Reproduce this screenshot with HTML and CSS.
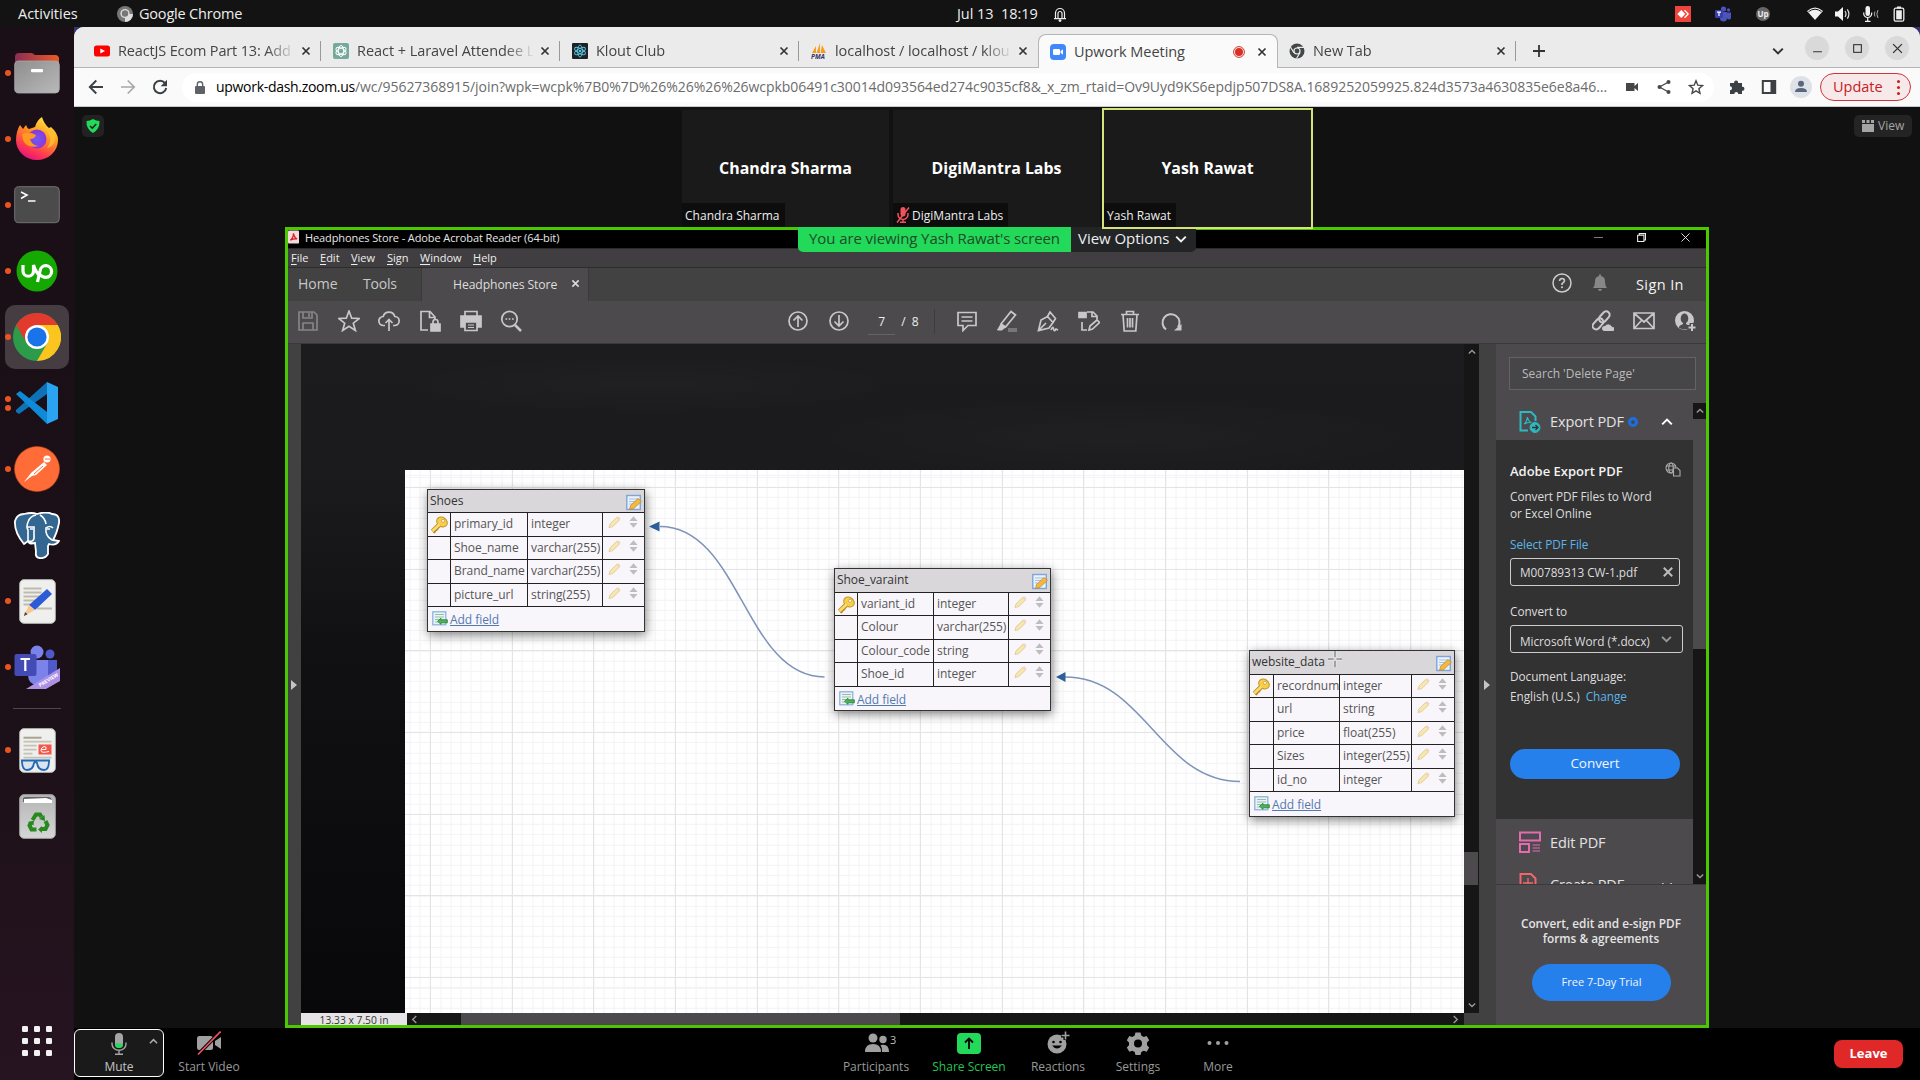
FILE: index.html
```html
<!DOCTYPE html>
<html lang="en">
<head>
<meta charset="utf-8">
<title>Upwork Meeting</title>
<link rel="stylesheet" href="styles.css">
</head>
<body>
<svg class="defs" aria-hidden="true">
  <defs>
    <linearGradient id="gFolder" x1="0" x2="1"><stop offset="0" stop-color="#8a2d55"/><stop offset="1" stop-color="#ee5a24"/></linearGradient>
    <linearGradient id="gGrey" x1="0" y1="0" x2="1" y2="1"><stop offset="0" stop-color="#8e8e8e"/><stop offset="1" stop-color="#b9b9b9"/></linearGradient>
    <linearGradient id="gFox" x1="0.8" y1="0" x2="0.3" y2="1"><stop offset="0" stop-color="#fff44f"/><stop offset=".4" stop-color="#ff9a1f"/><stop offset=".75" stop-color="#ff3d4f"/><stop offset="1" stop-color="#e5107f"/></linearGradient>
    <radialGradient id="gGlobe"><stop offset="0" stop-color="#6a5cf5"/><stop offset="1" stop-color="#8f35d8"/></radialGradient>
    <linearGradient id="gBin" x1="0" y1="0" x2="0" y2="1"><stop offset="0" stop-color="#b5b5b5"/><stop offset="1" stop-color="#d6d6d6"/></linearGradient>
  </defs>
  <symbol id="x" viewBox="0 0 10 10"><path d="M1.5 1.5l7 7M8.5 1.5l-7 7" stroke="currentColor" stroke-width="1.7" fill="none"/></symbol>
  <symbol id="down" viewBox="0 0 10 10"><path d="M1 3l4 4 4-4" stroke="currentColor" stroke-width="1.7" fill="none"/></symbol>
  <symbol id="up" viewBox="0 0 10 10"><path d="M1 7l4-4 4 4" stroke="currentColor" stroke-width="1.7" fill="none"/></symbol>
  <symbol id="key" viewBox="0 0 18 18"><path d="M2.500 15.500L9 9" stroke="#b98a1c" stroke-width="4.600"/><path d="M4 17l1.500-2.500L8 13" stroke="#b98a1c" stroke-width="2" fill="none"/><ellipse cx="12" cy="6" rx="5.600" ry="4.600" transform="rotate(35 12 6)" fill="#f7ce4a" stroke="#c3952a"/><path d="M2.500 15L9.500 8.500" stroke="#f9dc6b" stroke-width="2.800"/><circle cx="13" cy="4.800" r="1.500" fill="#fff" stroke="#b98a1c" stroke-width=".6"/></symbol>
  <symbol id="pen" viewBox="0 0 14 14"><path d="M1 13l1.200-4L9.500 2l3 2.800L5 12z" fill="#f7e6ae" stroke="#d9c591" stroke-width=".8"/><path d="M9.500 2l1.500-1.200 2.500 2.400-1 1.600z" fill="#eed2c0"/></symbol>
  <symbol id="sort" viewBox="0 0 10 14"><path d="M5 .5L9.500 6h-9zM5 13.500L.5 8h9z" fill="#bdbcbf"/></symbol>
  <symbol id="note" viewBox="0 0 16 17"><rect x=".8" y="1.500" width="13.500" height="14" fill="#eaf2fc" stroke="#7ea5d8" stroke-width="1.400"/><path d="M3 5h9M3 7.500h9M3 10h5" stroke="#a5c0e3"/><path d="M3.500 15.500l1-4 7.500-7 3.500 2.800-7.500 7z" fill="#f2b93c" stroke="#b98430" stroke-width=".7"/></symbol>
  <symbol id="add" viewBox="0 0 16 15"><rect x=".8" y=".8" width="13" height="13" fill="#e8f2fb" stroke="#86aedb" stroke-width="1.200"/><path d="M3 3.500h9M3 6h9M3 8.500h4M3 11h3" stroke="#9bbf9d"/><path d="M5.500 10.300L9 7.300v1.500h6.300v3H9v1.500z" fill="#4fb35b" stroke="#1d7c2c" stroke-width=".8"/></symbol>
</svg>

<header class="topbar">
  <span class="tb-act">Activities</span>
  <svg class="i16" viewBox="0 0 16 16"><circle cx="8" cy="8" r="8" fill="#777"/><path d="M8 8L16 8A8 8 0 0 1 8 16z" fill="#ddd"/><circle cx="8" cy="7.500" r="4.600" fill="#ddd"/><circle cx="8" cy="7.500" r="3.200" fill="#777"/></svg>
  <span class="tb-app">Google Chrome</span>
  <span class="tb-date">Jul 13&nbsp; 18:19</span>
  <svg class="tb-bell" viewBox="0 0 14 16"><path d="M2.500 12V7a4.500 4.500 0 0 1 9 0v5M1 12.600h12M5 12V7.500a2 2 0 0 1 4 0V12" fill="none" stroke="#eee" stroke-width="1.200"/><circle cx="7" cy="14.600" r="1.400" fill="#eee"/></svg>
  <svg class="tr tr1" viewBox="0 0 16 16"><rect width="16" height="16" fill="#ef443b"/><path d="M6.300 4l4 4-4 4-4-4z" fill="#fff"/><path d="M9.500 4.300L13.200 8l-3.700 3.700" fill="none" stroke="#fff" stroke-width="1.300"/></svg>
  <svg class="tr tr2" viewBox="0 0 16 16"><circle cx="8.500" cy="3" r="2.600" fill="#4b53bc"/><circle cx="13.500" cy="4" r="1.700" fill="#4b53bc"/><path d="M5 6h7v6a3.500 3.500 0 0 1-7 0zM12 6.500h4V11a2 2 0 0 1-4 1z" fill="#4b53bc"/><rect y="4" width="8" height="8" rx="1" fill="#3940ab"/><path d="M2 6.200h4M4 6.200V10" stroke="#fff" stroke-width="1.200"/></svg>
  <span class="tr-up">Up</span>
  <svg class="tr tr3" viewBox="0 0 16 14"><path d="M0 4Q8-3 16 4L8 13z" fill="#f2f2f2"/><path d="M1.500 4.700q6.500-5 13 0" fill="none" stroke="#131313"/></svg>
  <svg class="tr tr4" viewBox="0 0 16 14"><path d="M0 4.500h3L8 0v14L3 9.500H0z" fill="#f2f2f2"/><path d="M10 4q2 3 0 6M12.300 2.300q3.200 4.700 0 9.400" stroke="#ddd" stroke-width="1.200" fill="none"/></svg>
  <svg class="tr tr5" viewBox="0 0 16 16"><rect x="2.500" width="4.500" height="10" rx="2.200" fill="#f2f2f2"/><path d="M.7 6.500v1a4 4 0 0 0 8 0v-1M4.700 11.500V15M2 15.300h5.500" stroke="#f2f2f2" stroke-width="1.200" fill="none"/><path d="M12 5.500q-1.500 2.500 0 5M15 4q-2.300 4 0 8" stroke="#aaa" fill="none"/></svg>
  <svg class="tr tr6" viewBox="0 0 12 16"><path d="M4 .5h4v2H4z" fill="#eee"/><rect x="1.200" y="2.200" width="9.600" height="13" rx="1.500" fill="none" stroke="#eee" stroke-width="1.300"/><rect x="3.200" y="4.300" width="5.600" height="9" fill="#eee"/></svg>
</header>

<div class="desktop">
<nav class="dock">
  <div class="app dot"><svg class="files" width="46" height="44" viewBox="0 0 46 44"><path d="M1 6a4 4 0 0 1 4-4h13l3 2h20a4 4 0 0 1 4 4v20H1z" fill="url(#gFolder)"/><rect x=".7" y="10" width="44.600" height="32" rx="4" fill="url(#gGrey)" stroke="#aaa" stroke-width=".8"/><rect x="17" y="18" width="12" height="3.200" rx="1" fill="#fff"/></svg></div>
  <div class="app dot"><svg width="46" height="46" viewBox="0 0 46 46"><path d="M3 16q1-4 3-7l3 4 3-4q1 3 3 4l6-2q2-7 7-10 2 7 7 11l2-1q7 6 7 13a21 20 0 0 1-42 0q0-4 1-8z" fill="url(#gFox)"/><circle cx="23" cy="23" r="9.500" fill="url(#gGlobe)"/><path d="M8 18q7-3 14 1-1 4-6 4 2 7 9 7-12 3-16-6z" fill="#ff9a1f"/><path d="M32 14q8 8 1 18 10-3 8-14" fill="#ffc233" opacity=".8"/></svg></div>
  <div class="app dot"><svg width="46" height="38" viewBox="0 0 46 38"><rect x=".7" y=".7" width="44.600" height="36" rx="4" fill="#4b4b4b" stroke="#727272"/><path d="M7 6l6 3-6 3.500M14 15h7.500" fill="none" stroke="#fff" stroke-width="1.600"/></svg></div>
  <div class="app dot"><svg width="42" height="42" viewBox="0 0 42 42"><circle cx="21" cy="21" r="20.500" fill="#15a800"/><path d="M7 15v6a5 5 0 0 0 10.500 0v-6q2 7 6.500 11M21.500 32L24 21a5.800 5.800 0 1 1 6 6.300q-3.500 0-6.500-3" fill="none" stroke="#fff" stroke-width="3.200"/></svg></div>
  <div class="app dot active"><svg width="48" height="48" viewBox="0 0 48 48"><circle cx="24" cy="24" r="24" fill="#2c9c4b"/><path d="M3.200 12A24 24 0 0 1 44.800 12H24L13.600 30z" fill="#e23b2e"/><path d="M44.800 12A24 24 0 0 1 24 48l10.400-18L24 12z" fill="#fcc41f"/><circle cx="24" cy="24" r="12" fill="#fff"/><circle cx="24" cy="24" r="9.600" fill="#1a73e8"/></svg></div>
  <div class="app dot two"><svg width="42" height="42" viewBox="0 0 42 42"><path d="M31 0L0 28v2l3 2 28-20z" fill="#0d72b8"/><path d="M0 12l4-3 27 21v12z" fill="#0e8ad6"/><path d="M31 0l11 5v32l-11 5z" fill="#2aa4f1"/></svg></div>
  <div class="app dot"><svg width="46" height="46" viewBox="0 0 46 46"><circle cx="23" cy="23" r="22.500" fill="#ff6c37" stroke="#c9481c" stroke-width=".6"/><circle cx="33" cy="13" r="3.600" fill="#fff"/><path d="M30 16l3 3-11 10-4 1-8 6 7-9z" fill="#fff"/><path d="M31 13l5 0M18 25l8-7M20 28l9-8" stroke="#ff6c37" stroke-width="1"/></svg></div>
  <div class="app"><svg width="46" height="47" viewBox="0 0 46 47"><path d="M10 2q8-2 13 0 10-3 15 0 8 0 7 9-2 10-6 17l6 1q-3 5-10 3l-1 2v8q-3 5-9 4-4-1-3-6l-1-9q-5 2-7-2l-4 3Q0 20 1 9q2-7 9-7z" fill="#336791" stroke="#fff" stroke-width="1.800"/><path d="M14 30V18q-2-3 0-8 2-6 8-7M14 29q7 2 6-6v-8l-6 0M38 28q-7-4-6-12 4-3 7 0M32 12q-1-6-6-9M21 31l-6 0" fill="none" stroke="#fff" stroke-width="1.600"/><path d="M16 17h3M33 17h3" stroke="#fff" stroke-width="1.500"/></svg></div>
  <div class="app dot"><svg width="37" height="45" viewBox="0 0 37 45"><rect x=".6" y=".6" width="35.800" height="43.800" rx="4.500" fill="#efefed" stroke="#aaa"/><path d="M4.500 9.500h18M4.500 13.500h18M4.500 17.500h17M4.500 21.500h13M4.500 25.500h10M18 29.500h15" stroke="#bdbbad" stroke-width="1.800"/><path d="M28 10l5 5-17 16-6-5z" fill="#2b5bd7"/><path d="M10 26l6 5-11 6z" fill="#fbc690"/><path d="M5 37l1-4 2.500 2.300z" fill="#444"/></svg></div>
  <div class="app dot"><svg width="46" height="44" viewBox="0 0 46 44"><circle cx="23" cy="7" r="6.500" fill="#7b83eb"/><circle cx="36" cy="9" r="4.500" fill="#5059c9"/><path d="M30 15h13v17q-5 6-13 3z" fill="#5059c9"/><path d="M14 15h20v17q-2 8-11 8-9-1-9-10z" fill="#7b83eb"/><rect x=".5" y="9" width="22" height="22" rx="2" fill="#444bb5"/><path d="M6.500 14h9.500M11.300 14v12" stroke="#fff" stroke-width="2.200"/><path d="M12 44l34-21v13l-14 8z" fill="#ab90e4"/><text x="26" y="42" transform="rotate(-31 26 42)" class="t-prev">PREVIEW</text></svg></div>
  <div class="dock-sep"></div>
  <div class="app dot"><svg width="37" height="45" viewBox="0 0 37 45"><rect x=".6" y=".6" width="35.800" height="43.800" rx="4.500" fill="#efefed" stroke="#aaa"/><path d="M4.500 9.700h18" stroke="#aaa392" stroke-width="2"/><path d="M4.500 13.700h28M4.500 17.700h13M4.500 21.700h13M4.500 25.700h9M4.500 29.700h28" stroke="#c4c2b4" stroke-width="1.800"/><rect x="19.500" y="16.500" width="13" height="10" fill="#f4574a"/><path d="M22 21.500h5q1-3-2-3-3 1-3 4t8 1" fill="none" stroke="#fff"/><path d="M2 32.500h29M3 33q0 9 5 9 6 0 7-7 2-2 3 0 1 7 7 7 5 0 5-9" fill="#d9e4ef" stroke="#2369b5" stroke-width="1.800"/></svg></div>
  <div class="app"><svg width="37" height="45" viewBox="0 0 37 45"><rect x=".6" y=".6" width="35.800" height="43.800" rx="4.500" fill="url(#gBin)" stroke="#999"/><path d="M4 8V5q0-2 3-2h22q4 0 4 5z" fill="#666"/><path d="M5 9V5l22-1 6 2v3z" fill="#fff"/><g fill="none" stroke="#268a1f" stroke-width="4"><path d="M13.500 26l3.500-5.500h4l1.500 2.500M26.500 27l2 4-2 4h-5M17.500 35.500h-5l-2-4 1.500-3"/></g><path d="M20 25l5.500-4 .500 6zM23 39v-7l-4 3.500zM9 28l6-1.500-.5 5z" fill="#268a1f"/></svg></div>
  <div class="app grid9"><svg width="30" height="30" viewBox="0 0 30 30" fill="#f2f2f2"><rect width="6" height="6" rx="1.300"/><rect x="12" width="6" height="6" rx="1.300"/><rect x="24" width="6" height="6" rx="1.300"/><rect y="12" width="6" height="6" rx="1.300"/><rect x="12" y="12" width="6" height="6" rx="1.300"/><rect x="24" y="12" width="6" height="6" rx="1.300"/><rect y="24" width="6" height="6" rx="1.300"/><rect x="12" y="24" width="6" height="6" rx="1.300"/><rect x="24" y="24" width="6" height="6" rx="1.300"/></svg></div>
</nav>

<main class="chrome">
  <div class="tabs">
    <div class="tab"><svg class="i16" viewBox="0 0 16 16"><rect y="2.500" width="16" height="11" rx="2.500" fill="#f00"/><path d="M6.300 5.500v5L11 8z" fill="#fff"/></svg><span class="tt t1">ReactJS Ecom Part 13: Add</span><svg class="cl"><use href="#x"/></svg></div>
    <div class="tab"><svg class="i16" viewBox="0 0 16 16"><rect width="16" height="16" rx="2" fill="#75a99c"/><g fill="none" stroke="#fff" stroke-width="1"><ellipse cx="8" cy="8" rx="2.700" ry="5.500"/><ellipse cx="8" cy="8" rx="2.700" ry="5.500" transform="rotate(60 8 8)"/><ellipse cx="8" cy="8" rx="2.700" ry="5.500" transform="rotate(120 8 8)"/></g></svg><span class="tt t2">React + Laravel Attendee L</span><svg class="cl"><use href="#x"/></svg></div>
    <div class="tab"><svg class="i16" viewBox="0 0 16 16"><rect width="16" height="16" rx="1" fill="#202124"/><g fill="none" stroke="#53c1de"><ellipse cx="8" cy="8" rx="2.400" ry="6"/><ellipse cx="8" cy="8" rx="2.400" ry="6" transform="rotate(60 8 8)"/><ellipse cx="8" cy="8" rx="2.400" ry="6" transform="rotate(120 8 8)"/></g><circle cx="8" cy="8" r="1.300" fill="#53c1de"/></svg><span class="tt t3">Klout Club</span><svg class="cl"><use href="#x"/></svg></div>
    <div class="tab nosep"><svg class="i16" viewBox="0 0 16 16"><path d="M1 10L5 3v7zM5.500 10L9 0v10zM9.500 10L11 2l4 8z" fill="#f89c1c"/><text x="0" y="15.500" class="t-pma">PMA</text></svg><span class="tt t4">localhost / localhost / klou</span><svg class="cl"><use href="#x"/></svg></div>
    <div class="tab current"><svg class="i16" viewBox="0 0 16 16"><rect width="16" height="16" rx="4" fill="#4087fc"/><rect x="3" y="5" width="7" height="6" rx="1.300" fill="#fff"/><path d="M10.500 7.200L13 5.300v5.400l-2.500-1.900z" fill="#fff"/></svg><span class="tt t5">Upwork Meeting</span><svg class="rec" viewBox="0 0 12 12"><circle cx="6" cy="6" r="5.400" fill="none" stroke="#d93025"/><circle cx="6" cy="6" r="4" fill="#d93025"/></svg><svg class="cl"><use href="#x"/></svg></div>
    <div class="tab"><svg class="i16" viewBox="0 0 16 16"><circle cx="8" cy="8" r="7.500" fill="#44474a"/><circle cx="8" cy="8" r="3.600" fill="#ebebeb"/><circle cx="8" cy="8" r="2.400" fill="#44474a"/><path d="M8 4.400h7M4.900 9.800L1.400 4M11 9.800L7.500 15.500" stroke="#ebebeb" stroke-width="1.200"/></svg><span class="tt t6">New Tab</span><svg class="cl"><use href="#x"/></svg></div>
    <svg class="plus" viewBox="0 0 12 12"><path d="M6 0v12M0 6h12" stroke="#333" stroke-width="1.800"/></svg>
    <svg class="tabmenu" viewBox="0 0 10 10"><use href="#down"/></svg>
    <div class="wb"><svg viewBox="0 0 10 10"><path d="M1 8h8" stroke="#333"/></svg></div>
    <div class="wb"><svg viewBox="0 0 10 10"><rect x="1.500" y="1.500" width="7" height="7" fill="none" stroke="#333"/></svg></div>
    <div class="wb"><svg viewBox="0 0 10 10"><path d="M1 1l8 8M9 1L1 9" stroke="#333" stroke-width="1.200"/></svg></div>
  </div>
  <div class="bar">
    <svg class="nav" viewBox="0 0 16 16"><path d="M15 8H2M8.300 1.500L1.800 8l6.500 6.500" fill="none" stroke="#3c4043" stroke-width="1.900"/></svg>
    <svg class="nav" viewBox="0 0 16 16"><path d="M1 8h13M7.700 1.500L14.200 8l-6.500 6.500" fill="none" stroke="#a8a8a8" stroke-width="1.700"/></svg>
    <svg class="nav" viewBox="0 0 16 16"><path d="M13 4.200A6.200 6.200 0 1 0 14.200 9" fill="none" stroke="#3c4043" stroke-width="2"/><path d="M15 .8v6.400H8.600z" fill="#3c4043"/></svg>
    <div class="omni">
      <svg class="lock" viewBox="0 0 10 13"><rect y="5" width="10" height="8" rx="1" fill="#5f6368"/><path d="M2.300 5V3.500a2.700 2.700 0 0 1 5.400 0V5" fill="none" stroke="#5f6368" stroke-width="1.400"/></svg>
      <span class="url"><b>upwork-dash.zoom.us</b>/wc/95627368915/join?wpk=wcpk%7B0%7D%26%26%26%26wcpkb06491c30014d093564ed274c9035cf8&amp;_x_zm_rtaid=Ov9Uyd9KS6epdjp507DS8A.1689252059925.824d3573a4630835e6e8a46…</span>
      <svg class="oi" viewBox="0 0 16 16"><path d="M2 4h8.500v3L14 4v8l-3.500-3v3H2z" fill="#474747"/></svg>
      <svg class="oi" viewBox="0 0 16 16"><path d="M12.500 3L3.500 8l9 5" fill="none" stroke="#474747" stroke-width="1.300"/><circle cx="12.500" cy="3" r="2" fill="#474747"/><circle cx="3.500" cy="8" r="2" fill="#474747"/><circle cx="12.500" cy="13" r="2" fill="#474747"/></svg>
      <svg class="oi" viewBox="0 0 16 16"><path d="M8 1.800l1.800 4.400 4.700.4-3.600 3.100 1.100 4.600L8 11.800l-4 2.500 1.100-4.600-3.600-3.100 4.700-.4z" fill="none" stroke="#474747" stroke-width="1.400"/></svg>
    </div>
    <svg class="xi" viewBox="0 0 16 16"><path d="M1 4h4.200a2 2 0 1 1 3.800 0H13v3.800a2 2 0 1 1 0 3.900V15H9.300a2 2 0 0 0-4 0H1v-3.700a2 2 0 0 0 0-4z" fill="#3c4043"/></svg>
    <svg class="xi" viewBox="0 0 16 16"><rect x="1.800" y="2" width="12.400" height="12" fill="none" stroke="#3c4043" stroke-width="2"/><path d="M9.500 2h5v12h-5z" fill="#3c4043"/></svg>
    <svg class="av" viewBox="0 0 22 22"><circle cx="11" cy="11" r="11" fill="#dee1e6"/><circle cx="11" cy="7.800" r="3" fill="#5a6680"/><path d="M5 16q0-4 6-4t6 4z" fill="#5a6680"/></svg>
    <div class="update"><span>Update</span><i></i></div>
  </div>

  <section class="zoom">
    <div class="strip">
      <div class="shield"><svg viewBox="0 0 14 14"><path d="M7 0q3 2 6.500 2Q14 10 7 14 0 10 .5 2 4 2 7 0z" fill="#23d959"/><path d="M4 7l2.300 2.200L10.200 5" fill="none" stroke="#222" stroke-width="1.600"/></svg></div>
      <div class="tile"><strong class="n1">Chandra Sharma</strong><span class="lab l1">Chandra Sharma</span></div>
      <div class="tile"><strong class="n2">DigiMantra Labs</strong><span class="lab l2"><svg viewBox="0 0 14 16"><rect x="4.500" y="0" width="5" height="9.500" rx="2.500" fill="#f0525c"/><path d="M2 6v1.500a5 5 0 0 0 10 0V6M7 12.500V15M4 15.300h6M1 15.500L13 .5" fill="none" stroke="#f0525c" stroke-width="1.500"/></svg>DigiMantra Labs</span></div>
      <div class="tile talking"><strong class="n3">Yash Rawat</strong><span class="lab l3">Yash Rawat</span></div>
      <div class="view"><svg viewBox="0 0 12 12"><path d="M0 4h12v8H0zM0 0h3v3H0zM4.500 0h3v3h-3zM9 0h3v3H9z" fill="#a5a5a5"/></svg>View</div>
    </div>

    <div class="share">
      <div class="notice"><span class="green">You are viewing Yash Rawat's screen</span><span class="vopt">View Options<svg><use href="#down"/></svg></span></div>
      <div class="ac-title"><svg class="pdf" viewBox="0 0 12 14"><rect width="12" height="14" rx="1" fill="#f4dada"/><path d="M2.500 10.500Q6 8 6 3q1 5 4 6-4-.5-7.500 1.500" fill="none" stroke="#d3222a" stroke-width="1.400"/></svg><span>Headphones Store - Adobe Acrobat Reader (64-bit)</span>
        <svg class="w1" viewBox="0 0 10 10"><path d="M0 5h10" stroke="#888"/></svg><svg class="w2" viewBox="0 0 10 10"><path d="M.7 2.500h7v7h-7zM2.500 2V.7h7v7H8" fill="none" stroke="#eee" stroke-width="1.200"/></svg><svg class="w3" viewBox="0 0 10 10"><path d="M.5.5l9 9M9.500.5l-9 9" stroke="#eee"/></svg></div>
      <div class="ac-menu"><span><u>F</u>ile</span><span><u>E</u>dit</span><span><u>V</u>iew</span><span><u>S</u>ign</span><span><u>W</u>indow</span><span><u>H</u>elp</span></div>
      <div class="ac-tabs"><span class="home">Home</span><span class="tools">Tools</span><div class="doc"><span>Headphones Store</span><svg><use href="#x"/></svg></div>
        <svg class="help" viewBox="0 0 20 20"><circle cx="10" cy="10" r="9" fill="none" stroke="#ccc" stroke-width="1.500"/><path d="M7.500 8q.3-2.500 2.600-2.500T12.500 7.800Q12.500 9 10 10.600V12" fill="none" stroke="#ccc" stroke-width="1.600"/><circle cx="10" cy="14.200" r="1" fill="#ccc"/></svg>
        <svg class="bell" viewBox="0 0 16 18"><path d="M1 14q2-2 2-7 0-4 4-5 0-2 1-2t1 2q4 1 4 5 0 5 2 7zM6 15h4q-.3 2-2 2t-2-2z" fill="#888"/></svg><span class="sign">Sign In</span></div>
      <div class="ac-tools">
        <svg viewBox="0 0 22 22" stroke="#868586"><path d="M2 2h15l3 3v15H2zM6 2v6h9V2M6 20v-7h10v7M12 3v4" /></svg>
        <svg viewBox="0 0 22 22"><path d="M11 1l2.700 7.200 7.600.3-6 4.700 2.100 7.300-6.400-4.200-6.400 4.200 2.100-7.300-6-4.700 7.600-.3z"/></svg>
        <svg viewBox="0 0 22 22"><path d="M7 15.500H5.500a4.500 4.500 0 0 1-.3-9 6 6 0 0 1 11.600 0 4.500 4.500 0 0 1-.3 9H15M11 21V9.500M7.500 13L11 9.500l3.500 3.500"/></svg>
        <svg viewBox="0 0 22 22"><path d="M9 20H2V1.500h9L16 7v3M10.500 2v5.500H16"/><path d="M12 14h9v7h-9z" fill="#c9c8c9"/><path d="M14 14v-2a2.500 2.500 0 0 1 5 0v2"/></svg>
        <svg viewBox="0 0 22 22"><path d="M1 6h20v11H1z" fill="#c9c8c9"/><path d="M5 6V1.500h12V6"/><path d="M5 12h12v8.500H5z" fill="#4c4a4c"/><path d="M8 15h6M8 17.500h6" stroke-width="1"/></svg>
        <svg viewBox="0 0 22 22"><circle cx="9.500" cy="9" r="7.700"/><path d="M15 15l6 6" stroke-width="2.500"/><path d="M5.500 9h1.700M8.700 9h1.700M12 9h1.700"/></svg>
        <i></i>
        <svg viewBox="0 0 22 22"><circle cx="11" cy="11" r="9"/><path d="M11 17V6M6.500 10.500L11 6l4.500 4.500"/></svg>
        <svg viewBox="0 0 22 22"><circle cx="11" cy="11" r="9"/><path d="M11 5v11M6.500 11.500L11 16l4.500-4.500"/></svg>
        <div class="pages"><span class="pg">7</span><span>/&nbsp; 8</span></div>
        <svg viewBox="0 0 22 22"><path d="M2 2.500h18v13h-8l-5 5v-5H2zM5.500 7h11M5.500 11h11"/></svg>
        <svg viewBox="0 0 22 22"><path d="M12 20h9" stroke="#777" stroke-width="4"/><path d="M5 14L15 1.500l4.500 3.500L9.500 17z"/><path d="M5 14l-3.500 6h4.500l3.500-3z" fill="#c9c8c9" stroke-width="1"/></svg>
        <svg viewBox="0 0 22 22"><path d="M1.500 20.500L4 10l6.500-3.500 5.500 6L12 18zM1.500 20.500L9 13M10.500 6.500L13 2l5.500 6.500-2.500 4M14 20q2-4.500 2.500-1t2.500 0l2 1"/></svg>
        <svg viewBox="0 0 22 22"><path d="M9 20H4v-8M9 2h6l4 4v4M14 2v4.500h5M11 20l1-4 7-6 2.500 2.500-7 6.500z"/><path d="M1 2.500h7v5H1z" fill="#c9c8c9"/></svg>
        <svg viewBox="0 0 22 22"><path d="M2 4.500h18M7.500 4V1.500h7V4M4 4.500l1.200 16.500h11.600L18 4.500M8.500 8v9.500M11 8v9.500M13.500 8v9.500"/></svg>
        <svg viewBox="0 0 22 22"><path d="M6 19.500A8.500 8.500 0 1 1 18 17.500" stroke-width="2"/><path d="M21.500 14v6.500H14z" fill="#c9c8c9" stroke="none"/></svg>
        <i></i>
        <svg viewBox="0 0 22 22"><g transform="rotate(-48 9.500 10)" stroke-width="2"><rect x="-2" y="6.500" width="12.500" height="7" rx="3.500"/><rect x="7.500" y="6.500" width="12.500" height="7" rx="3.500"/></g><path d="M12 21.500a3 3 0 0 1 1-6 4 4 0 0 1 7 1 2.500 2.500 0 0 1 1 5z" fill="#c9c8c9" stroke="#4c4a4c" stroke-width="1"/></svg>
        <svg viewBox="0 0 22 22"><path d="M1 3h20v15.500H1zM2 4l9 8 9-8M2 17.500l6.500-7M20 17.500l-6.500-7"/></svg>
        <svg viewBox="0 0 22 22"><circle cx="10.500" cy="10.500" r="9.500" fill="#c9c8c9" stroke="none"/><ellipse cx="10.500" cy="8.500" rx="3.800" ry="5" fill="#4c4a4c" stroke="none"/><path d="M4.500 17.500q1-2.500 4.500-3.500V12h3v2q3.500 1 4.500 3.500-6 4-12 0z" fill="#4c4a4c" stroke="none"/><path d="M18 13v9M13.500 17.500h9" stroke="#4c4a4c" stroke-width="5"/><path d="M18 14v7M14.500 17.500h7" stroke-width="2"/></svg>
      </div>
      <div class="ac-body">
        <div class="leftbar"><i class="tri"></i></div>
        <div class="docarea">
          <div class="viewport">
            <div class="page">
              <svg class="links" viewBox="0 0 1059 543"><path d="M255 56.500C335 56.500 340 207 419.500 207M660 207C740 207 755 311.500 835 311.500" fill="none" stroke="#7d94b8" stroke-width="1.500"/><path d="M244 56.500l10.500-5v10zM651 207l9.500-5v10z" fill="#2f609b"/></svg>
              <div class="tbl shoes"><div class="th"><span>Shoes</span><svg><use href="#note"/></svg></div>
                <div class="tr_"><svg class="k"><use href="#key"/></svg><span>primary_id</span><span>integer</span><em><svg class="p"><use href="#pen"/></svg><svg class="s"><use href="#sort"/></svg></em></div>
                <div class="tr_"><b></b><span>Shoe_name</span><span>varchar(255)</span><em><svg class="p"><use href="#pen"/></svg><svg class="s"><use href="#sort"/></svg></em></div>
                <div class="tr_"><b></b><span>Brand_name</span><span>varchar(255)</span><em><svg class="p"><use href="#pen"/></svg><svg class="s"><use href="#sort"/></svg></em></div>
                <div class="tr_"><b></b><span>picture_url</span><span>string(255)</span><em><svg class="p"><use href="#pen"/></svg><svg class="s"><use href="#sort"/></svg></em></div>
                <div class="tf"><svg><use href="#add"/></svg><u>Add field</u></div></div>
              <div class="tbl variant"><div class="th"><span>Shoe_varaint</span><svg><use href="#note"/></svg></div>
                <div class="tr_"><svg class="k"><use href="#key"/></svg><span>variant_id</span><span>integer</span><em><svg class="p"><use href="#pen"/></svg><svg class="s"><use href="#sort"/></svg></em></div>
                <div class="tr_"><b></b><span>Colour</span><span>varchar(255)</span><em><svg class="p"><use href="#pen"/></svg><svg class="s"><use href="#sort"/></svg></em></div>
                <div class="tr_"><b></b><span>Colour_code</span><span>string</span><em><svg class="p"><use href="#pen"/></svg><svg class="s"><use href="#sort"/></svg></em></div>
                <div class="tr_"><b></b><span>Shoe_id</span><span>integer</span><em><svg class="p"><use href="#pen"/></svg><svg class="s"><use href="#sort"/></svg></em></div>
                <div class="tf"><svg><use href="#add"/></svg><u>Add field</u></div></div>
              <div class="tbl web"><div class="th"><span>website_data</span><svg><use href="#note"/></svg></div>
                <div class="tr_"><svg class="k"><use href="#key"/></svg><span>recordnum</span><span>integer</span><em><svg class="p"><use href="#pen"/></svg><svg class="s"><use href="#sort"/></svg></em></div>
                <div class="tr_"><b></b><span>url</span><span>string</span><em><svg class="p"><use href="#pen"/></svg><svg class="s"><use href="#sort"/></svg></em></div>
                <div class="tr_"><b></b><span>price</span><span>float(255)</span><em><svg class="p"><use href="#pen"/></svg><svg class="s"><use href="#sort"/></svg></em></div>
                <div class="tr_"><b></b><span>Sizes</span><span>integer(255)</span><em><svg class="p"><use href="#pen"/></svg><svg class="s"><use href="#sort"/></svg></em></div>
                <div class="tr_"><b></b><span>id_no</span><span>integer</span><em><svg class="p"><use href="#pen"/></svg><svg class="s"><use href="#sort"/></svg></em></div>
                <div class="tf"><svg><use href="#add"/></svg><u>Add field</u></div></div>
              <svg class="cursor" viewBox="0 0 14 16"><path d="M7 0v6M7 10v6M0 8h5.500M8.500 8H14" stroke="#fff" stroke-width="2.400"/><path d="M7 0v6M7 10v6M0 8h5.500M8.500 8H14" stroke="#444"/></svg>
            </div>
          </div>
          <div class="vs"><svg><use href="#up"/></svg><i></i><svg><use href="#down"/></svg></div>
          <div class="hs"><span>13.33 x 7.50 in</span><svg viewBox="0 0 10 10"><path d="M7 1L3 5l4 4" stroke="#999" fill="none" stroke-width="1.500"/></svg><i></i><svg class="r" viewBox="0 0 10 10"><path d="M3 1l4 4-4 4" stroke="#999" fill="none" stroke-width="1.500"/></svg></div>
          <div class="corner"></div>
        </div>
        <div class="rightbar"><i class="tri"></i></div>
        <aside class="panel">
          <div class="search">Search 'Delete Page'</div>
          <div class="scroller">
            <div class="list">
              <div class="item exp"><svg class="ic" viewBox="0 0 22 22" fill="none" stroke="#2cb9c0" stroke-width="2"><path d="M9 19.500H1.500V1H12l4.500 4.500V10"/><path d="M5 13q3-2 3.500-7 1 5 4 5.500-4 0-7.500 1.500" stroke-width="1.200"/><circle cx="16" cy="16.500" r="5" fill="#2cb9c0" stroke-width="1"/><path d="M13 16.500h5.500M16.500 14l2.500 2.500-2.500 2.500" stroke="#333" stroke-width="1.300"/></svg><span class="ex">Export PDF</span><svg class="st" viewBox="0 0 10 10"><circle cx="5" cy="5" r="5" fill="#1b6fe0"/><path d="M5 2.200l.7 1.800 2 .2-1.500 1.200.5 2L5 6.400 3.300 7.400l.5-2-1.500-1.200 2-.2z" fill="#464548"/></svg><svg class="ch"><use href="#up"/></svg></div>
              <div class="export">
                <div class="hd"><strong>Adobe Export PDF</strong><svg viewBox="0 0 16 15" fill="none" stroke="#aaa" stroke-width="1.100"><circle cx="6" cy="6" r="5"/><ellipse cx="6" cy="6" rx="2.200" ry="5"/><path d="M1 4h10M1 8h10"/><path d="M8.500 6h4l2.500 2.500v5.500H8.500z" fill="#323234"/></svg></div>
                <p class="d1">Convert PDF Files to Word</p><p class="d2">or Excel Online</p>
                <a class="sel">Select PDF File</a>
                <div class="file"><span>M00789313 CW-1.pdf</span><svg><use href="#x"/></svg></div>
                <p class="cv">Convert to</p>
                <div class="file ms"><span>Microsoft Word (*.docx)</span><svg><use href="#down"/></svg></div>
                <p class="dl">Document Language:</p><p class="en">English (U.S.) <a>Change</a></p>
                <div class="btn">Convert</div>
              </div>
              <div class="item edit"><svg class="ic" viewBox="0 0 22 22" fill="none" stroke="#e46bb0" stroke-width="2"><path d="M1 1.500h20v8H1zM1 13h9v8H1z"/><path d="M13.500 14h7.500M13.500 17h7.500M13.500 20h7.500" stroke-width="1"/></svg><span>Edit PDF</span></div>
              <div class="item create"><svg class="ic" viewBox="0 0 22 22" fill="none" stroke="#f0676b" stroke-width="2"><path d="M9 20H1.500V1H12l4.500 4.500V20"/><path d="M9 5v10M4 10h10" stroke-width="1.300"/></svg><span>Create PDF</span><svg class="ch"><use href="#down"/></svg></div>
            </div>
            <div class="ps"><svg><use href="#up"/></svg><i></i><svg><use href="#down"/></svg></div>
          </div>
          <div class="promo"><p class="pr1">Convert, edit and e-sign PDF</p><p class="pr2">forms &amp; agreements</p><div class="btn">Free 7-Day Trial</div></div>
        </aside>
      </div>
    </div>

    <footer class="zbar">
      <div class="mute"><svg class="mic" viewBox="0 0 16 22"><rect x="4" y="0" width="8" height="15" rx="4" fill="#a5a5a5"/><path d="M4 10.500h8V11a4 4 0 0 1-8 0z" fill="#23d959"/><path d="M1 9.500V11a7 6.300 0 0 0 14 0V9.500M8 17.500V21M4 21.300h8" fill="none" stroke="#a5a5a5" stroke-width="1.400"/></svg><svg class="car"><use href="#up"/></svg><span>Mute</span></div>
      <div class="zi z1"><svg viewBox="0 0 24 24"><rect y="5" width="16" height="14" rx="2.500" fill="#a0a0a0"/><path d="M18 10l6-4v12l-6-4z" fill="#a0a0a0"/><path d="M1 23.500L23.500.500" stroke="#000" stroke-width="3.500"/><path d="M1 23.500L23.500.5" stroke="#f0525c" stroke-width="1.600"/></svg><span>Start Video</span></div>
      <div class="zi z2"><svg viewBox="0 0 24 24" fill="#a0a0a0"><circle cx="8" cy="7" r="4.500"/><circle cx="18" cy="8.500" r="3.700"/><path d="M0 21q0-8 8-8t8 8zM17 21q.5-4-1.500-7 8.500-2 8.500 7z"/></svg><small>3</small><span>Participants</span></div>
      <div class="zi z3"><svg viewBox="0 0 24 22"><rect width="24" height="21" rx="4" fill="#23d959"/><path d="M12 16V6M8 9.500l4-4 4 4" fill="none" stroke="#000" stroke-width="1.800"/></svg><span>Share Screen</span></div>
      <div class="zi z4"><svg viewBox="0 0 24 24"><circle cx="11" cy="13" r="9.500" fill="#a0a0a0"/><circle cx="7.500" cy="11" r="1.300"/><circle cx="14.500" cy="11" r="1.300"/><path d="M6 14.500q5 6 10 0z"/><path d="M19.500 0v9M15 4.500h9" stroke="#000" stroke-width="4"/><path d="M19.500 .5v8M15.500 4.500h8" stroke="#a0a0a0" stroke-width="1.600"/></svg><span>Reactions</span></div>
      <div class="zi z5"><svg viewBox="0 0 24 24"><path d="M9.500 1.500h5l.8 3 2.400 1.400 3-1 2.500 4.300-2.200 2.200v2.800l2.200 2.200-2.500 4.300-3-1-2.400 1.400-.8 3h-5l-.8-3-2.400-1.400-3 1L.8 16.400 3 14.200v-2.800L.8 9.200l2.500-4.300 3 1 2.400-1.400z" fill="#a0a0a0"/><circle cx="12" cy="12.500" r="4" fill="#000"/></svg><span>Settings</span></div>
      <div class="zi z6"><svg viewBox="0 0 24 24" fill="#a0a0a0"><circle cx="3.500" cy="12" r="2"/><circle cx="12" cy="12" r="2"/><circle cx="20.500" cy="12" r="2"/></svg><span>More</span></div>
      <div class="leave">Leave</div>
    </footer>
  </section>
</main>
</div>
</body>
</html>
```
FILE: styles.css
```css
* { box-sizing: border-box; }
body { margin: 0; width: 1920px; height: 1080px; overflow: hidden; background: #111; font: 15px "Open Sans", "Noto Sans", sans-serif; color: #eee; }
p { margin: 0; }
svg { display: block; flex: none; }
.defs { position: absolute; width: 0; height: 0; }
span, strong, a { white-space: nowrap; }

/* GNOME top bar */
.topbar { height: 27px; background: #131313; display: flex; align-items: center; font-size: 14.500px; line-height: 26px; }
.topbar > * { flex: none; }
.i16 { width: 16px; height: 16px; }
.tb-act { width: 99px; padding-left: 18px; }
.topbar .i16 { margin-left: 18px; }
.tb-app { width: 818px; padding-left: 6px; letter-spacing: -.2px; }
.tb-date { width: 98px; padding-left: 6px; letter-spacing: -.05px; }
.tb-bell { width: 14px; height: 16px; margin-left: 4px; }
.tr { height: 16px; }
.tr1 { width: 16px; margin-left: 608px; }
.tr2 { width: 16px; margin-left: 24px; }
.tr-up { width: 14px; height: 14px; margin-left: 25px; border-radius: 50%; background: #666; font: 700 8px/13px "Open Sans", sans-serif; text-align: center; }
.tr3 { width: 16px; margin-left: 37px; }
.tr4 { width: 16px; margin-left: 12px; }
.tr5 { width: 16px; margin-left: 12px; }
.tr6 { width: 12px; margin-left: 14px; }

.desktop { display: flex; height: 1053px; background: #373373; }

/* Dock */
.dock { width: 74px; background: linear-gradient(#1a0f16, #1b1017 60%, #261420); display: flex; flex-direction: column; padding: 13px 0 6px; }
.app { height: 66px; flex: none; display: grid; place-items: center; position: relative; }
.dot::before { content: ""; position: absolute; left: 5px; top: 30px; width: 6px; height: 6px; border-radius: 50%; background: #e95420; }
.two::before { top: 26px; }
.two::after { content: ""; position: absolute; left: 5px; top: 35px; width: 6px; height: 6px; border-radius: 50%; background: #e95420; }
.active::after { content: ""; position: absolute; left: 5px; top: 1px; width: 64px; height: 64px; border-radius: 10px; background: #453d42; }
.active svg { z-index: 1; }
.active::before { z-index: 1; }
.files { margin-bottom: 1px; }
.dock-sep { height: 17px; margin: 0 13px; background: linear-gradient(#50454b, #50454b) 0 8px / 100% 1px no-repeat; }
.grid9 { margin-top: auto; }
.t-prev { font: 700 5px "Open Sans", sans-serif; fill: #fff; }
.t-pma { font: italic 700 6.500px "Open Sans", sans-serif; fill: #336; }

/* Browser */
.chrome { width: 1846px; display: flex; flex-direction: column; background: #fafafa; border-radius: 10px 10px 0 0; overflow: hidden; }
.tabs { height: 41px; background: #ebebeb; border-bottom: 1px solid #b5b5b5; display: flex; padding-left: 8px; align-items: flex-start; }
.tabs > * { flex: none; }
.tab { width: 239px; height: 34px; margin-top: 7px; padding: 0 10px 0 12px; display: flex; align-items: center; color: #444; background: linear-gradient(#999, #999) 100% 7px / 1px 20px no-repeat; }
.nosep { background: none; }
.tt { flex: 1; margin-left: 8px; font-size: 14.500px; line-height: 30px; overflow: hidden; -webkit-mask-image: linear-gradient(90deg, #000 148px, transparent 178px); }
.t1 { letter-spacing: -.15px; }
.t2 { letter-spacing: -.05px; }
.t3, .t4, .t5, .t6 { letter-spacing: -.05px; }
.cl { width: 10px; height: 10px; margin-left: 7px; color: #333; }
.rec { width: 12px; height: 12px; margin-left: 6px; margin-right: 5px; }
.current { width: 240px; margin-right: -1px; background: #fafafa; border: 1px solid #b5b5b5; border-bottom: 0; border-radius: 8px 8px 0 0; padding-left: 11px; padding-right: 10px; }
.current .tt { -webkit-mask-image: none; }
.plus { width: 12px; height: 12px; margin: 18px 0 0 17px; }
.tabmenu { width: 12px; height: 12px; margin: 18px 21px 0 227px; color: #333; }
.wb { width: 24px; height: 24px; margin: 9px 16px 0 0; border-radius: 50%; background: #d9d9d9; display: grid; place-items: center; }
.wb svg { width: 11px; height: 11px; }
.bar { height: 39px; border-bottom: 1px solid #c9c9c9; display: flex; align-items: center; padding-left: 14px; }
.bar > *, .omni > * { flex: none; }
.nav { width: 16px; height: 16px; margin-right: 16px; }
.omni { width: 1532px; height: 29px; margin-left: -2px; border-radius: 15px; background: #fff; display: flex; align-items: center; padding-left: 13px; }
.lock { width: 10px; height: 13px; }
.url { width: 1408px; margin-left: 11px; color: #6c6c6c; font-size: 14px; letter-spacing: -.05px; line-height: 28px; }
.url b { font-weight: 400; color: #000; letter-spacing: -.3px; }
.oi { width: 16px; height: 16px; margin-right: 16px; }
.xi { width: 16px; height: 16px; margin-left: 16px; }
.bar .omni + .xi { margin-left: 15px; }
.av { width: 22px; height: 22px; margin-left: 13px; }
.update { width: 91px; height: 28px; margin-left: 8px; border: 1px solid #d2333a; border-radius: 14px; background: #f7e9e9; color: #c5221f; display: flex; align-items: center; padding-left: 12px; font-size: 14.500px; line-height: 26px; }
.update span { width: 64px; }
.update i { width: 3px; height: 3px; border-radius: 50%; background: #c5221f; box-shadow: 0 -6px #c5221f, 0 6px #c5221f; }

/* Meeting */
.zoom { height: 973px; background: #111; display: flex; flex-direction: column; }
.strip { height: 120px; display: flex; padding-left: 8px; align-items: flex-start; }
.strip > * { flex: none; }
.shield { width: 22px; height: 22px; margin-top: 8px; border-radius: 5px; background: #222; display: grid; place-items: center; }
.shield svg { width: 14px; height: 14px; }
.tile { width: 207px; height: 117px; margin: 3px 4px 0 0; background: #1a1a1a; display: flex; flex-direction: column; align-items: flex-start; }
.shield + .tile { margin-left: 578px; }
.tile strong { align-self: center; margin-top: 45px; font: 700 15.900px/26px "Open Sans", sans-serif; color: #fff; }
.lab { margin-top: auto; height: 24px; padding: 0 5px 0 3px; background: #0d0d0d; font-size: 12px; line-height: 23px; display: flex; align-items: center; gap: 2px; letter-spacing: .02px; }
.lab svg { width: 14px; height: 16px; }
.talking { width: 211px; height: 121px; margin: 1px 0 0 -2px; border: 2px solid #d5e27c; position: relative; z-index: 2; }
.view { width: 58px; height: 22px; margin: 8px 0 0 541px; border-radius: 5px; background: #242424; color: #a5a5a5; font-size: 12px; line-height: 22px; display: flex; align-items: center; gap: 4px; padding-left: 8px; }
.view svg { width: 12px; height: 12px; }

.share { width: 1424px; height: 801px; margin-left: 211px; border: 3px solid #4cc802; background: #4c4a4c; display: flex; flex-direction: column; position: relative; }
.notice { position: absolute; left: 510px; top: -3px; height: 25px; display: flex; font-size: 15px; line-height: 23px; z-index: 1; }
.green { width: 273px; background: #23d959; color: #1f4a2b; text-align: center; border-radius: 0 0 0 5px; letter-spacing: -.1px; }
.vopt { width: 125px; padding: 0 0 2px 7px; background: #222426; display: flex; align-items: center; gap: 6px; border-radius: 0 0 5px 0; letter-spacing: -.05px; }
.vopt svg { width: 12px; height: 12px; }

/* PDF reader */
.ac-title { height: 19px; background: #000; display: flex; align-items: flex-start; font-size: 11px; line-height: 16px; color: #e6e6e6; border-bottom: 1px solid #2c2b2c; }
.ac-title > * { flex: none; }
.pdf { width: 11px; height: 14px; }
.ac-title span { margin-left: 6px; width: 1289px; letter-spacing: -.1px; }
.w1, .w2, .w3 { width: 9px; height: 9px; margin-top: 3px; }
.w2 { margin-left: 34px; }
.w3 { margin-left: 35px; }
.ac-menu { height: 19px; background: #403e40; border-bottom: 1px solid #2d2c2d; display: grid; grid-template-columns: 29px 31px 36px 33px 53px 40px; padding-left: 3px; font-size: 11px; line-height: 18px; }
.ac-menu u { text-underline-offset: 2px; }
.ac-tabs { height: 33px; background: #424242; display: flex; font-size: 14px; line-height: 31px; color: #c8c8c8; }
.ac-tabs > * { flex: none; }
.home { width: 75px; padding-left: 10px; }
.tools { width: 59px; letter-spacing: -.2px; }
.doc { width: 166px; height: 33px; background: #4c4a4c; display: flex; align-items: center; padding-left: 31px; font-size: 12.200px; letter-spacing: -.1px; color: #ddd; box-shadow: 0 0 0 1px #3a393a; clip-path: inset(0 -1px 0 -1px); }
.doc span { width: 118px; }
.doc svg { width: 9px; height: 9px; margin-top: -3px; }
.help { width: 20px; height: 20px; margin: 5px 0 0 964px; }
.bell { width: 16px; height: 18px; margin: 6px 28px 0 20px; }
.sign { color: #f2f2f2; font-size: 14.500px; font-weight: 500; line-height: 33px; letter-spacing: .4px; }
.ac-tools { height: 43px; background: #4c4a4c; border-bottom: 1px solid #3a393a; display: grid; grid-template-columns: repeat(6, 40.700px) 1fr 41px 41px 87px repeat(6, 40.800px) 391px repeat(3, 41px) 1px; align-items: center; justify-items: center; padding-bottom: 2px; }
.ac-tools svg { width: 22px; height: 22px; fill: none; stroke: #c9c8c9; stroke-width: 1.700; }
.ac-tools svg[stroke] { stroke: #868586; }
.ac-tools svg:nth-child(-n+6) { margin-right: 1px; }
.pages { justify-self: stretch; height: 25px; display: flex; font-size: 12px; line-height: 25px; width: 76px; border-right: 1px solid #3e3d3e; }
.pg { width: 27px; margin-left: 9px; margin-right: 6px; text-align: center; box-shadow: 0 1px #656365; }
.ac-body { height: 681px; display: flex; }
.leftbar, .rightbar { background: #424142; display: flex; align-items: center; justify-content: center; padding-right: 2px; }
.leftbar { width: 13px; }
.rightbar { width: 17px; }
.tri { border: 5px solid transparent; border-left: 6px solid #c5c5c5; border-right: 0; }
.docarea { width: 1178px; display: grid; grid-template: 669px 12px / 1163px 15px; }
.viewport { padding: 125.500px 0 0 104px; background:
  radial-gradient(ellipse 260px 30px at 30% 6%, rgba(255, 255, 255, .02), transparent),
  radial-gradient(ellipse 320px 40px at 70% 14%, rgba(255, 255, 255, .02), transparent),
  linear-gradient(#1c1b1d, #1b1a1c 130px, #111012 300px, #08080a 669px); }
.page { position: relative; height: 543.500px; background:
  repeating-linear-gradient(90deg, #e4e4e6 0 1px, transparent 1px 81.670px) 25px 0,
  repeating-linear-gradient(#e4e4e6 0 1px, transparent 1px 81.670px) 0 17px,
  repeating-linear-gradient(90deg, #f3f3f5 0 1px, transparent 1px 10.210px) 4.600px 0,
  repeating-linear-gradient(#f3f3f5 0 1px, transparent 1px 10.210px) 0 6.800px, #fff; background-repeat: repeat; }
.links { position: absolute; left: 0; top: 0; width: 1059px; height: 543px; }
.tbl { position: absolute; border: 1px solid #333; background: #f8f6fb; color: #555; font: 12px/20px "Open Sans", sans-serif; letter-spacing: -.05px; box-shadow: 1px 3px 10px rgba(0, 0, 0, .5); }
.shoes { left: 22px; top: 19px; width: 218px; height: 143px; --c: 22px 77px 75px 1fr; }
.variant { left: 429px; top: 98.500px; width: 217px; height: 143px; --c: 22px 76px 75px 1fr; }
.web { left: 844px; top: 180.500px; width: 206px; height: 167px; --c: 23px 66px 72px 1fr; }
.th { height: 22.500px; background: #d9d7da; color: #333; display: flex; justify-content: space-between; padding: 0 2px 0 2px; line-height: 21px; }
.th svg { width: 16px; height: 17px; margin-top: 4px; }
.tr_ { height: 23.500px; display: grid; grid-template-columns: var(--c); border-top: 1px solid #222; }
.tr_ > * { border-left: 1px solid #222; overflow: hidden; }
.tr_ > :first-child { border-left: 0; }
.tr_ span { padding-left: 3px; line-height: 21px; }
.k { width: 18px; height: 18px; margin: 3px 0 0 2px; }
.tr_ em { display: flex; padding: 2px 0 0 5px; gap: 8px; }
.p { width: 13px; height: 14px; }
.s { width: 9px; height: 14px; }
.tf { border-top: 1px solid #222; height: 24px; display: flex; padding: 4px 0 0 4px; gap: 2px; color: #5279b0; }
.tf u { line-height: 17px; }
.tf svg { width: 16px; height: 15px; }
.cursor { position: absolute; left: 923px; top: 181px; width: 14px; height: 16px; }
.vs, .ps { background: #161616; display: flex; flex-direction: column; align-items: center; color: #999; }
.vs svg, .ps svg { width: 8px; height: 8px; margin: 4px 0; }
.vs i { width: 14px; height: 33px; margin: 492px 1px auto 0; background: #4c4a4c; }
.hs { background: #161616; display: flex; align-items: center; }
.hs span { width: 106px; height: 12px; background: #e6e4e6; color: #333; font-size: 10.300px; line-height: 14px; text-align: center; overflow: hidden; }
.hs svg { width: 9px; height: 9px; margin-left: 3px; }
.hs i { width: 439px; height: 12px; margin-left: 42px; background: #4c4a4c; }
.hs .r { margin: 0 4px 0 auto; }
.corner { background: #424142; }

.panel { width: 210px; background: #4c4a4d; }
.search { width: 187px; height: 33px; margin: 13px 0 13px 13px; border: 1px solid #646265; background: #464548; color: #bbb; font-size: 12px; line-height: 31px; padding-left: 12px; }
.scroller { height: 481px; display: flex; }
.list { width: 197px; overflow: hidden; }
.ps { width: 13px; }
.ps i { width: 13px; height: 230px; background: #4c4a4d; margin-bottom: auto; }
.item { display: flex; align-items: center; height: 50px; padding-left: 23px; font-size: 14.500px; letter-spacing: -.1px; color: #e2e2e2; }
.item .ic { width: 22px; height: 22px; margin-right: 9px; }
.exp { height: 37px; }
.ex { width: 78px; }
.st { width: 10px; height: 10px; }
.ch { width: 12px; height: 12px; margin-left: 23px; color: #fff; }
.export { height: 379px; background: #323233; padding: 20px 0 0 14px; font-size: 11.800px; letter-spacing: -.05px; line-height: 16px; color: #ddd; }
.export p { height: 16px; }
.hd { display: flex; height: 25px; width: 171px; justify-content: space-between; }
.hd strong { font-size: 13px; line-height: 22px; color: #f2f2f2; font-weight: 600; letter-spacing: 0; }
.hd svg { width: 16px; height: 15px; margin-top: 2px; }
.export .d1 { margin-top: 3px; }
.d2 { padding-top: 1px; }
.sel, .en a { color: #5cb5e8; }
.sel { display: block; margin: 16px 0 6px; }
.file { width: 170px; height: 28px; border: 1px solid #ccc; border-radius: 3px; display: flex; align-items: center; justify-content: space-between; padding: 0 5px 0 9px; }
.file svg { width: 12px; height: 12px; color: #bbb; }
.ms { width: 173px; padding-right: 10px; }
.ms span { padding-top: 3px; }
.ms svg { width: 11px; color: #999; }
.cv { margin: 17px 0 6px; }
.dl { margin-top: 15px; }
.en { margin-top: 4px; }
.en a { margin-left: 3px; }
.btn { background: #2680eb; color: #f0f5ff; text-align: center; border-radius: 20px; }
.export .btn { width: 170px; height: 30px; margin-top: 45px; font-size: 13.500px; line-height: 29px; }
.edit { height: 46px; }
.create { height: 38px; }
.create .ch { margin-left: 37px; margin-top: 3px; }
.promo { height: 142px; border-top: 1px solid #3b3a3b; padding: 31px 0 0; text-align: center; font-size: 11.800px; font-weight: 600; line-height: 15px; color: #e4e4e4; }
.promo .btn { width: 139px; height: 37px; margin: 18px 0 0 36px; font-size: 11px; line-height: 36px; font-weight: 400; }

/* Meeting controls */
.zbar { flex: 1; height: 52px; background: #000; display: flex; color: #999; font-size: 12px; line-height: 16px; position: relative; }
.mute { width: 90px; height: 48px; margin-top: 1px; border: 1px solid #fff; border-radius: 6px; background: #1a1a1a; color: #c4c4c4; display: grid; grid-template: 23px 1fr / 1fr 18px 1fr; padding-top: 3px; }
.mic { width: 16px; height: 22px; grid-column: 2; justify-self: center; }
.car { width: 9px; height: 9px; margin: 4px 0 0 21px; color: #aaa; }
.mute span { grid-column: 1 / -1; text-align: center; line-height: 22px; }
.zi { display: grid; grid-template-rows: 24px 18px; justify-items: center; align-content: start; padding-top: 3px; width: 80px; position: relative; }
.zi svg { width: 24px; height: 24px; }
.zi span { line-height: 24px; }
.z1 { margin-left: 5px; }
.z2 { margin-left: 587px; }
.z2 svg { margin-left: 2px; }
.z2 small { position: absolute; left: 54px; top: 4px; font-size: 11px; line-height: 16px; color: #bbb; }
.z3 { margin-left: 13px; color: #23c552; }
.z4 { margin-left: 9px; }
.zi.z3 svg { height: 22px; margin-top: 2px; }
.leave { width: 69px; height: 28px; margin: 12px 17px 0 auto; background: #e02828; border-radius: 8px; color: #fff; font-size: 13px; font-weight: 700; line-height: 27px; text-align: center; }
```
